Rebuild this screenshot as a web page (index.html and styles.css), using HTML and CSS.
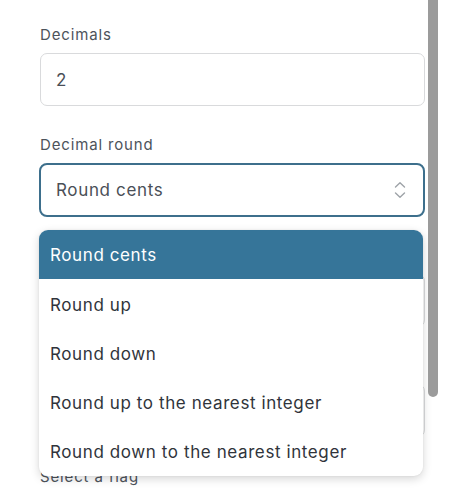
FILE: index.html
```html
<!DOCTYPE html>
<html lang="en">
<head>
<meta charset="utf-8">
<title>Settings</title>
<link rel="stylesheet" href="styles.css">
</head>
<body>
<div class="page">
  <form class="form">
    <div class="field">
      <label class="label">Decimals</label>
      <div class="input">2</div>
    </div>
    <div class="field">
      <label class="label">Decimal round</label>
      <div class="select-wrap">
        <div class="select">
          <span>Round cents</span>
          <svg class="chev" width="12" height="18" viewBox="0 0 12 18" fill="none" stroke="#9ea3a8" stroke-width="1.4" stroke-linecap="round" stroke-linejoin="round"><path d="M1.5 6 L6 1.8 L10.5 6"/><path d="M1.5 12 L6 16.2 L10.5 12"/></svg>
        </div>
        <ul class="dropdown">
          <li class="option active">Round cents</li>
          <li class="option">Round up</li>
          <li class="option">Round down</li>
          <li class="option">Round up to the nearest integer</li>
          <li class="option">Round down to the nearest integer</li>
        </ul>
      </div>
    </div>
    <div class="field">
      <span class="label label-empty" aria-hidden="true"></span>
      <div class="input"></div>
    </div>
    <div class="field">
      <span class="label label-empty" aria-hidden="true"></span>
      <div class="input"></div>
    </div>
    <div class="field">
      <label class="label flag-label">Select a flag</label>
      <div class="input"></div>
    </div>
  </form>
  <div class="scrollbar"></div>
</div>
</body>
</html>
```
FILE: styles.css
```css
html, body {
  margin: 0;
  padding: 0;
  background: #ffffff;
}
body {
  font-family: Inter, "Noto Sans", "Liberation Sans", sans-serif;
  overflow: hidden;
}
.page {
  position: relative;
  width: 470px;
  height: 492px;
  overflow: hidden;
}
.form {
  display: flex;
  flex-direction: column;
  gap: 29px;
  padding: 25px 0 0 40px;
  width: 385px;
}
.field {
  display: flex;
  flex-direction: column;
  gap: 8px;
}
.label {
  font-size: 15px;
  line-height: 20px;
  letter-spacing: 0.85px;
  color: #4d535b;
}
.label-empty {
  height: 20px;
}
.flag-label {
  position: relative;
  top: 1px;
}
.input {
  box-sizing: border-box;
  height: 53px;
  border: 1px solid #d9dadc;
  border-radius: 7px;
  padding: 0 15px;
  display: flex;
  align-items: center;
  font-size: 17px;
  letter-spacing: 0.6px;
  color: #4a4f57;
  background: #fff;
}
.select-wrap {
  position: relative;
  margin-left: -1px;
}
.select {
  box-sizing: border-box;
  height: 54px;
  border: 2px solid #3d6f8c;
  border-radius: 8px;
  padding: 0 17px 0 15px;
  display: flex;
  align-items: center;
  justify-content: space-between;
  font-size: 17px;
  letter-spacing: 0.65px;
  color: #4a4f57;
  background: #fff;
}
.chev {
  display: block;
}
.dropdown {
  position: absolute;
  top: calc(100% + 13px);
  left: 0;
  width: 384px;
  margin: 0;
  padding: 0;
  list-style: none;
  background: #fff;
  border-radius: 9px;
  box-shadow: 0 3px 10px rgba(0, 0, 0, 0.16), 0 0 2px rgba(0, 0, 0, 0.08);
  overflow: hidden;
  z-index: 2;
}
.option {
  height: 49.2px;
  display: flex;
  align-items: center;
  padding: 0 11px;
  font-size: 17px;
  letter-spacing: 0.6px;
  color: #30343b;
}
.option + .option {
  padding-top: 2px;
  box-sizing: border-box;
}
.option.active {
  background: #367599;
  color: #ffffff;
}
.scrollbar {
  position: absolute;
  top: 0;
  left: 428px;
  width: 10px;
  height: 397px;
  background: #9b9b9b;
  border-radius: 0 0 5px 5px;
  z-index: 3;
}
```
